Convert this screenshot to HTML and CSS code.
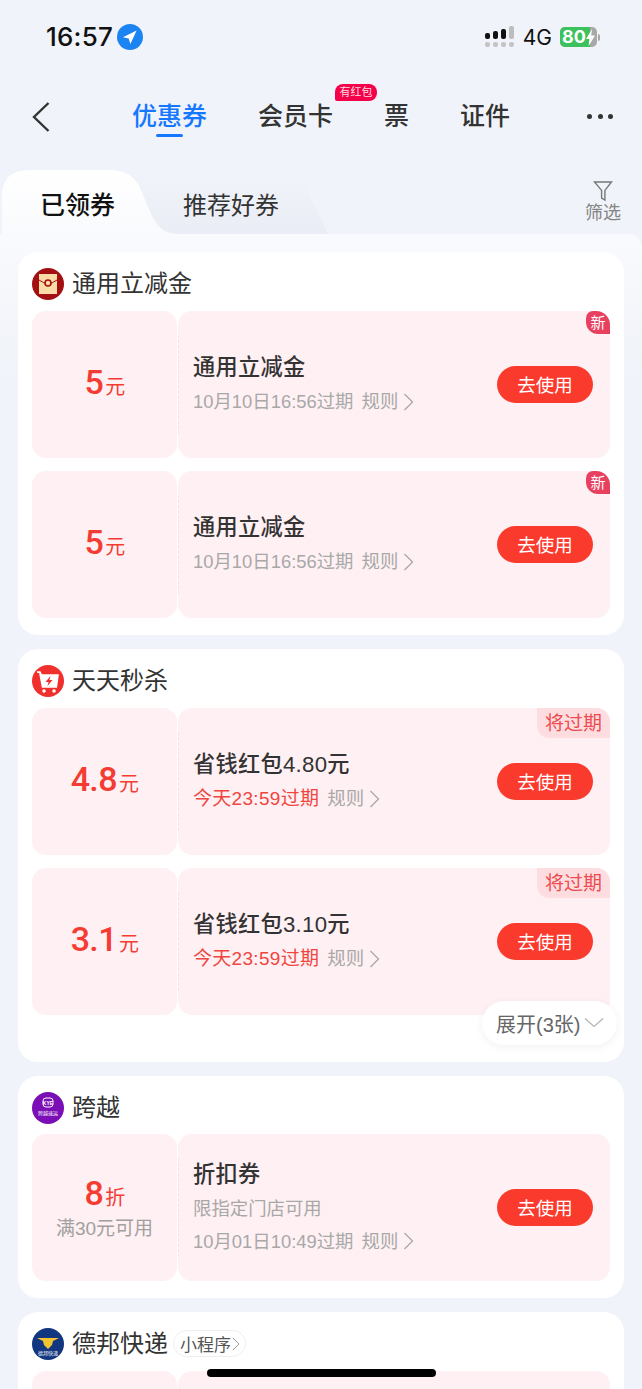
FILE: index.html
```html
<!DOCTYPE html>
<html lang="zh-CN">
  <head>
    <meta charset="utf-8" />
    <meta name="viewport" content="width=device-width, initial-scale=1" />
    <title>优惠券</title>
    <link rel="stylesheet" href="styles.css">
  </head>
  <body>
    <div class="page">
      <div class="status">
        <div class="status-left">
          <span class="time">16:57</span>
          <svg class="loc" width="26" height="26" viewBox="0 0 26 26"><circle cx="13" cy="13" r="13" fill="#1b84f2"/><path d="M6 13.2 19.6 6.6 13.4 20l-1.7-5.6z" fill="#fff"/></svg>
        </div>
        <div class="status-right">
          <svg class="signal" width="30" height="24" viewBox="0 0 30 24">
            <rect x="0" y="8" width="5" height="6" rx="2" fill="#111"/><rect x="8" y="6" width="5" height="8" rx="2" fill="#111"/><rect x="16" y="4" width="5" height="10" rx="2" fill="#111"/><rect x="24" y="1" width="5" height="13" rx="2" fill="#bdbdbd"/>
            <rect x="0" y="17" width="5" height="5" rx="2" fill="#c4c4c4"/><rect x="8" y="17" width="5" height="5" rx="2" fill="#c4c4c4"/><rect x="16" y="17" width="5" height="5" rx="2" fill="#c4c4c4"/><rect x="24" y="17" width="5" height="5" rx="2" fill="#c4c4c4"/>
          </svg>
          <span class="net">4G</span>
          <div class="battery"><div class="batt-fill">80</div><svg class="bolt" width="9" height="17" viewBox="0 0 9 17"><path d="M6 0 0 10h3.4L2.6 17 9 6.6H5.2z" fill="#fff"/></svg></div>
          <span class="batt-cap"></span>
        </div>
      </div>

      <div class="nav">
        <svg class="back" width="20" height="32" viewBox="0 0 20 32"><path d="M17.5 2 3 16l14.500 14" fill="none" stroke="#333" stroke-width="2.400"/></svg>
        <div class="nav-tabs">
          <span class="nav-tab on">优惠券</span>
          <span class="nav-tab">会员卡<em class="hot">有红包</em></span>
          <span class="nav-tab">票</span>
          <span class="nav-tab">证件</span>
        </div>
        <div class="more"><i></i><i></i><i></i></div>
      </div>

      <div class="tabs">
        <div class="tab tab-on">
          <svg class="tab-bg" width="190" height="66" viewBox="0 0 190 66"><defs><linearGradient id="tw" x1="0" y1="0" x2="0" y2="1"><stop offset="0" stop-color="#fff"/><stop offset="1" stop-color="#f9fafd"/></linearGradient></defs><path d="M0 66V26Q0 0 28 0H108Q130 0 138 18L150 46Q158 64 178 64L190 66Z" fill="url(#tw)"/></svg>
          <span>已领券</span>
        </div>
        <div class="tab tab-off">
          <svg class="tab-bg" width="200" height="62" viewBox="0 0 200 62"><defs><linearGradient id="tg" x1="0" y1="0" x2="0" y2="1"><stop offset="0" stop-color="#f0f3f9"/><stop offset="1" stop-color="#eaedf5"/></linearGradient></defs><path d="M0 60V0H148Q170 0 178 18L198 60Z" fill="url(#tg)"/></svg>
          <span>推荐好券</span>
        </div>
        <div class="filter">
          <svg width="20" height="22" viewBox="0 0 20 22"><path d="M1.500 2h17l-6.600 8.400V20L8.600 18v-7.600z" fill="none" stroke="#777" stroke-width="1.400"/></svg>
          <span>筛选</span>
        </div>
      </div>

      <div class="panel">
        <section class="card">
          <div class="card-head">
            <svg class="logo" width="32" height="32" viewBox="0 0 32 32"><circle cx="16" cy="16" r="16" fill="#a30f12"/><rect x="7" y="6" width="18" height="20" fill="#fcdca6"/><path d="M7 12q9 7 18 0" fill="none" stroke="#a30f12" stroke-width="1"/><circle cx="16" cy="15" r="3" fill="#fcdca6" stroke="#a30f12" stroke-width="1.600"/></svg>
            <h2>通用立减金</h2>
          </div>
          <div class="coupon">
            <div class="c-left"><p class="amount">5<small>元</small></p></div>
            <div class="c-right">
              <div class="c-info"><h3>通用立减金</h3><p class="meta">10月10日16:56过期<span class="rule">规则<svg width="11" height="20" viewBox="0 0 11 20"><path d="M1.500 2l8 8-8 8" fill="none" stroke="#a8a8a8" stroke-width="1.300"/></svg></span></p></div>
              <button class="use">去使用</button>
              <span class="tag-new">新</span>
            </div>
          </div>
          <div class="coupon">
            <div class="c-left"><p class="amount">5<small>元</small></p></div>
            <div class="c-right">
              <div class="c-info"><h3>通用立减金</h3><p class="meta">10月10日16:56过期<span class="rule">规则<svg width="11" height="20" viewBox="0 0 11 20"><path d="M1.500 2l8 8-8 8" fill="none" stroke="#a8a8a8" stroke-width="1.300"/></svg></span></p></div>
              <button class="use">去使用</button>
              <span class="tag-new">新</span>
            </div>
          </div>
        </section>

        <section class="card card-more">
          <div class="card-head">
            <svg class="logo" width="32" height="32" viewBox="0 0 32 32"><circle cx="16" cy="16" r="16" fill="#f0302c"/><path d="M5 7h3l1.500 3H26l-1.600 12H10.500L8 9" fill="#fff" stroke="#fff" stroke-width="1.500"/><circle cx="12" cy="26" r="1.800" fill="#fff"/><circle cx="22" cy="26" r="1.800" fill="#fff"/><path d="M18.500 11l-5 6h3l-1 4 5-6h-3z" fill="#f0302c"/></svg>
            <h2>天天秒杀</h2>
          </div>
          <div class="coupon">
            <div class="c-left"><p class="amount">4.8<small>元</small></p></div>
            <div class="c-right">
              <div class="c-info"><h3>省钱红包4.80元</h3><p class="meta"><span class="soon">今天23:59过期</span><span class="rule">规则<svg width="11" height="20" viewBox="0 0 11 20"><path d="M1.500 2l8 8-8 8" fill="none" stroke="#a8a8a8" stroke-width="1.300"/></svg></span></p></div>
              <button class="use">去使用</button>
              <span class="tag-exp">将过期</span>
            </div>
          </div>
          <div class="coupon">
            <div class="c-left"><p class="amount">3.1<small>元</small></p></div>
            <div class="c-right">
              <div class="c-info"><h3>省钱红包3.10元</h3><p class="meta"><span class="soon">今天23:59过期</span><span class="rule">规则<svg width="11" height="20" viewBox="0 0 11 20"><path d="M1.500 2l8 8-8 8" fill="none" stroke="#a8a8a8" stroke-width="1.300"/></svg></span></p></div>
              <button class="use">去使用</button>
              <span class="tag-exp">将过期</span>
            </div>
          </div>
          <div class="expand">展开(3张)<svg width="20" height="12" viewBox="0 0 20 12"><path d="M1 1.500l9 8 9-8" fill="none" stroke="#b5b5b5" stroke-width="1.300"/></svg></div>
        </section>

        <section class="card card-tight">
          <div class="card-head">
            <svg class="logo" width="32" height="32" viewBox="0 0 32 32"><circle cx="16" cy="16" r="16" fill="#7b0fb5"/><rect x="11" y="6" width="10" height="9" rx="3" fill="none" stroke="#fff" stroke-width="1"/><text x="16" y="13" text-anchor="middle" font-size="5" font-weight="700" fill="#fff" font-family="Liberation Sans">KYE</text><text x="16" y="23" text-anchor="middle" font-size="5" fill="#fff" font-family="Noto Sans CJK SC">跨越速运</text></svg>
            <h2>跨越</h2>
          </div>
          <div class="coupon">
            <div class="c-left"><p class="amount">8<small>折</small></p><p class="limit">满30元可用</p></div>
            <div class="c-right">
              <div class="c-info"><h3>折扣券</h3><p class="meta">限指定门店可用</p><p class="meta">10月01日10:49过期<span class="rule">规则<svg width="11" height="20" viewBox="0 0 11 20"><path d="M1.500 2l8 8-8 8" fill="none" stroke="#a8a8a8" stroke-width="1.300"/></svg></span></p></div>
              <button class="use">去使用</button>
            </div>
          </div>
        </section>

        <section class="card">
          <div class="card-head">
            <svg class="logo" width="32" height="32" viewBox="0 0 32 32"><circle cx="16" cy="16" r="16" fill="#12367f"/><path d="M5 10h22l-6 3-1 4-4 4-4-4-1-4z" fill="#f3c431"/><circle cx="16" cy="12" r="2" fill="#f3c431"/><text x="16" y="27" text-anchor="middle" font-size="5" fill="#fff" font-family="Noto Sans CJK SC">德邦快递</text></svg>
            <h2>德邦快递</h2>
            <span class="mini">小程序<svg width="8" height="14" viewBox="0 0 8 14"><path d="M1 1l6 6-6 6" fill="none" stroke="#999" stroke-width="1"/></svg></span>
          </div>
          <div class="coupon">
            <div class="c-left"></div>
            <div class="c-right"></div>
          </div>
        </section>
      </div>

      <div class="home-bar"></div>
    </div>
  </body>
</html>
```

FILE: styles.css
```css
html,
body {
  margin: 0;
  background: #f0f3f9;
}

.page {
  position: relative;
  width: 642px;
  height: 1389px;
  overflow: hidden;
  background: #f0f3f9;
  font-family: "Liberation Sans", "Noto Sans CJK SC", sans-serif;
  color: #333;
}

h2,
h3,
p {
  margin: 0;
  font-weight: 400;
}

/* status bar */
.status {
  height: 74px;
  box-sizing: border-box;
  padding: 23px 42px 0 46px;
  display: flex;
  justify-content: space-between;
  align-items: flex-start;
}

.status-left {
  display: flex;
  align-items: center;
  gap: 4px;
}

.time {
  font-family: Inter, sans-serif;
  font-size: 26px;
  font-weight: 500;
  line-height: 28px;
  color: #111;
  letter-spacing: 0.2px;
}

.status-right {
  display: flex;
  align-items: center;
  height: 28px;
}

.net {
  margin-left: 8px;
  font-family: Inter, sans-serif;
  font-size: 21px;
  color: #111;
}

.battery {
  position: relative;
  margin-left: 8px;
  width: 37px;
  height: 20px;
  border-radius: 5px;
  background: #a8a8a8;
  overflow: hidden;
}

.batt-fill {
  width: 30px;
  height: 20px;
  background: #3cc15d;
  color: #fff;
  font-family: Inter, sans-serif;
  font-size: 18px;
  font-weight: 700;
  line-height: 20px;
  text-align: left;
  padding-left: 2px;
  box-sizing: border-box;
}

.bolt {
  position: absolute;
  right: 2px;
  top: 2px;
}

.batt-cap {
  width: 2px;
  height: 7px;
  margin-left: 1px;
  background: #a8a8a8;
  border-radius: 0 2px 2px 0;
}

/* top nav */
.nav {
  height: 70px;
  box-sizing: border-box;
  display: flex;
  align-items: flex-start;
  padding: 27px 29px 0 31px;
  position: relative;
}

.nav-tabs {
  display: flex;
  gap: 51px;
  margin-left: 81px;
}

.back {
  flex: none;
}

.nav-tab {
  position: relative;
  font-size: 25px;
  line-height: 30px;
  font-weight: 500;
  color: #333;
}

.nav-tab.on {
  color: #1677ff;
}

.nav-tab.on:after {
  content: "";
  position: absolute;
  left: 24px;
  bottom: -6px;
  width: 27px;
  height: 3px;
  border-radius: 2px;
  background: #1677ff;
}

.hot {
  position: absolute;
  left: 77px;
  top: -17px;
  width: 42px;
  height: 17px;
  border-radius: 8px 8px 8px 2px;
  background: #f5004a;
  color: #fdd;
  font-style: normal;
  font-size: 11px;
  font-weight: 400;
  line-height: 17px;
  text-align: center;
}

.more {
  margin-left: auto;
  display: flex;
  gap: 5.500px;
  padding-top: 13px;
}

.more i {
  width: 5px;
  height: 5px;
  border-radius: 50%;
  background: #333;
}

/* coupon tabs */
.tabs {
  height: 90px;
  position: relative;
  display: flex;
  align-items: flex-start;
  padding-top: 26px;
  box-sizing: border-box;
}

.tab {
  position: relative;
  line-height: 70px;
}

.tab span {
  position: relative;
}

.tab-bg {
  position: absolute;
  top: 0;
  left: 0;
}

.tab-on {
  order: 2;
  width: 130px;
  margin-left: -320px;
  padding-left: 40px;
  font-size: 25px;
  font-weight: 500;
  color: #111;
}

.tab-on .tab-bg {
  left: 2px;
}

.tab-off {
  order: 1;
  margin-left: 130px;
  width: 190px;
  font-size: 24px;
  padding-left: 53px;
  box-sizing: border-box;
  color: #333;
}

.tab-off span {
  top: 1px;
}

.tab-off .tab-bg {
  top: 4px;
}

.filter {
  order: 3;
  position: absolute;
  right: 20px;
  top: 36px;
  width: 38px;
  display: flex;
  flex-direction: column;
  align-items: center;
  font-size: 18px;
  line-height: 22px;
  color: #858585;
}

/* list */
.panel {
  padding: 18px 18px 0;
  background: linear-gradient(#f9fafd, #f0f3f9 140px);
  border-radius: 0 14px 0 0;
  position: relative;
}

.card {
  position: relative;
  background: #fff;
  border-radius: 20px;
  padding: 0 14px 17px;
  margin-bottom: 14px;
}

.card-more {
  padding-bottom: 47px;
}

.card-head {
  height: 59px;
  display: flex;
  align-items: center;
  box-sizing: border-box;
  padding-top: 5px;
}

.card-tight .card-head {
  height: 58px;
}

.logo {
  flex: none;
}

.card-head h2 {
  margin: -5px 0 0 8px;
  font-size: 24px;
  color: #333;
}

.mini {
  margin: -1px 0 0 5px;
  height: 25px;
  padding: 0 5px 0 6px;
  border: 1px solid #eee;
  border-radius: 14px;
  display: flex;
  align-items: center;
  gap: 1px;
  font-size: 17px;
  color: #555;
}

.coupon {
  display: flex;
  gap: 1px;
  height: 147px;
}

.coupon + .coupon {
  margin-top: 13px;
}

.c-left {
  width: 145px;
  flex: none;
  background: #fff0f3;
  border-radius: 14px;
  display: flex;
  flex-direction: column;
  align-items: center;
  justify-content: center;
}

.amount {
  font-family: Roboto, "Noto Sans CJK SC", sans-serif;
  font-size: 34px;
  font-weight: 500;
  line-height: 38px;
  letter-spacing: -0.6px;
  color: #f43c33;
}

.amount small {
  font-size: 20px;
  font-weight: 400;
  margin-left: 2px;
}

.limit {
  font-size: 19px;
  line-height: 24px;
  color: #a0a0a0;
}

.c-right {
  position: relative;
  flex: 1;
  display: flex;
  align-items: center;
  justify-content: space-between;
  padding: 0 17px 0 15px;
  background: #fff0f3;
  border-radius: 14px;
  overflow: hidden;
}

.c-right:before {
  content: "";
  position: absolute;
  left: 0;
  top: 24px;
  bottom: 24px;
  border-left: 1px dashed #fbdde2;
}

.c-info h3 {
  font-size: 22.200px;
  line-height: 34px;
  font-weight: 500;
  letter-spacing: 0.3px;
  color: #333;
}

.meta {
  display: flex;
  align-items: center;
  font-size: 18.400px;
  line-height: 33px;
  color: #a8a8a8;
}

.rule {
  display: flex;
  align-items: center;
  margin-left: 8px;
  gap: 5px;
}

.soon {
  color: #f0453e;
  font-size: 19px;
  letter-spacing: 0.3px;
}

.use {
  width: 96px;
  height: 37px;
  border: 0;
  padding: 0 0 2px;
  border-radius: 19px;
  background: #fb3a2e;
  color: #fff;
  font-family: inherit;
  font-size: 18.500px;
}

.tag-new {
  position: absolute;
  right: 0;
  top: 0;
  width: 24px;
  height: 23px;
  background: #e8405f;
  color: #fff;
  border-radius: 7px 0 0 12px;
  font-size: 15px;
  line-height: 23px;
  text-align: center;
}

.tag-exp {
  position: absolute;
  right: 0;
  top: 0;
  width: 73px;
  height: 30px;
  background: #fedde0;
  color: #ee4a4f;
  border-radius: 0 0 0 12px;
  font-size: 19px;
  line-height: 32px;
  text-align: center;
}

.expand {
  position: absolute;
  right: 7px;
  bottom: 17px;
  width: 135px;
  height: 44px;
  box-sizing: border-box;
  padding-left: 14px;
  background: #fff;
  border-radius: 22px;
  box-shadow: 0 2px 10px rgba(0, 0, 0, 0.06);
  display: flex;
  align-items: center;
  gap: 4px;
  font-size: 20px;
  color: #666;
}

.home-bar {
  position: absolute;
  left: 207px;
  bottom: 12px;
  width: 229px;
  height: 8px;
  border-radius: 4px;
  background: #000;
}
```
